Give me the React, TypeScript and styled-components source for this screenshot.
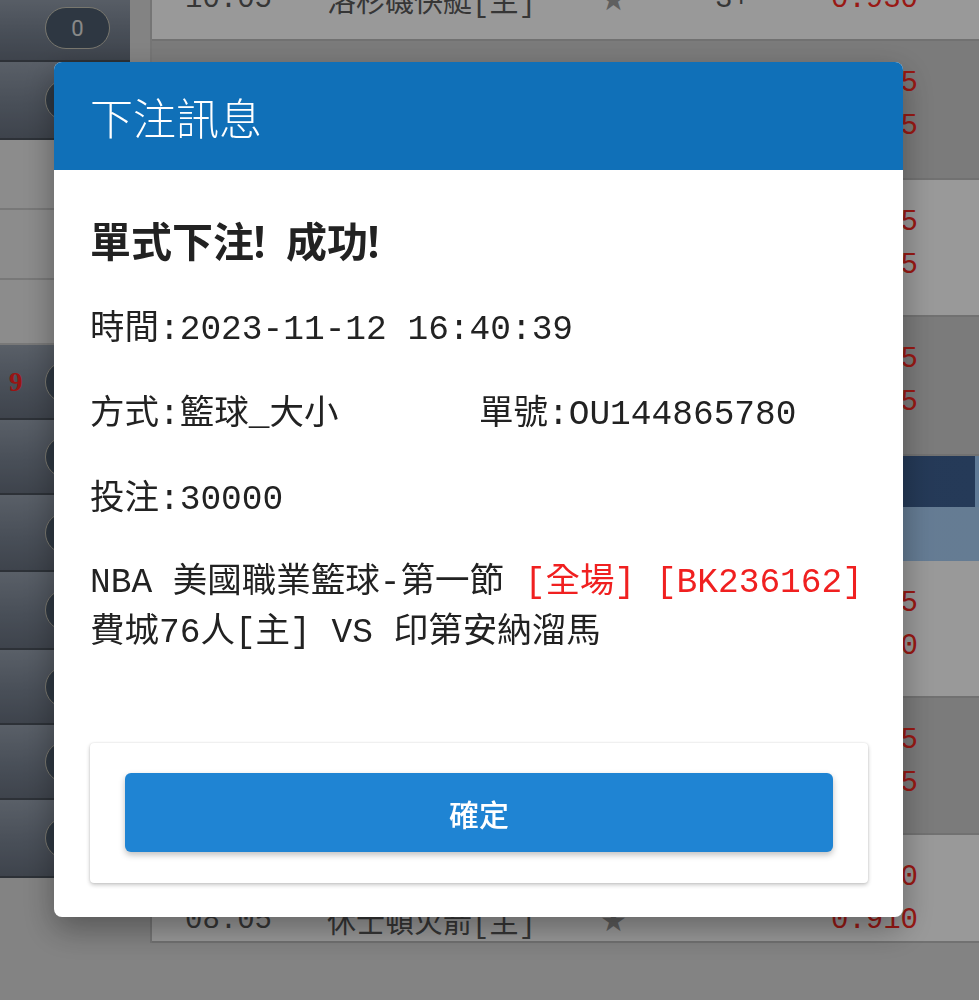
import React from 'react';
import styled, { createGlobalStyle } from 'styled-components';

const MONO = `'Liberation Mono', 'Noto Sans CJK TC', monospace`;
const CJK = `'Noto Sans CJK TC', 'Noto Sans', sans-serif`;

const GlobalStyle = createGlobalStyle`
  html, body {
    margin: 0;
    padding: 0;
    background: #dadada;
  }
  * {
    box-sizing: border-box;
  }
`;

type Line = {
  lead: string;
  team: string;
  star?: boolean;
  spread?: string;
  odds: string;
};

type Block = {
  height: number;
  shade: 'light' | 'dark';
  lines: Line[];
};

const sideItems: { kind: 'dark' | 'light'; badge?: string; mark?: string; height: number }[] = [
  { kind: 'dark', badge: '0', height: 66 },
  { kind: 'dark', badge: '0', height: 78 },
  { kind: 'light', height: 70 },
  { kind: 'light', height: 70 },
  { kind: 'light', height: 65 },
  { kind: 'dark', badge: '2', mark: '9', height: 75 },
  { kind: 'dark', badge: '1', height: 75 },
  { kind: 'dark', badge: '1', height: 77 },
  { kind: 'dark', badge: '3', height: 78 },
  { kind: 'dark', badge: '0', height: 75 },
  { kind: 'dark', badge: '2', height: 75 },
  { kind: 'dark', badge: '1', height: 78 },
];

const blocksTop: Block[] = [
  {
    height: 127,
    shade: 'light',
    lines: [
      { lead: '11-12', team: '金州勇士', spread: '', odds: '0.910' },
      { lead: '10:05', team: '洛杉磯快艇[主]', star: true, spread: '3+', odds: '0.930' },
    ],
  },
  {
    height: 139,
    shade: 'dark',
    lines: [
      { lead: '11-12', team: '波士頓塞爾提克', spread: '', odds: '0.955' },
      { lead: '08:35', team: '布魯克林籃網[主]', star: true, spread: '2', odds: '0.895' },
    ],
  },
  {
    height: 137,
    shade: 'light',
    lines: [
      { lead: '11-12', team: '紐約尼克', spread: '', odds: '0.925' },
      { lead: '09:05', team: '密爾瓦基公鹿[主]', star: true, spread: '5', odds: '0.925' },
    ],
  },
  {
    height: 139,
    shade: 'dark',
    lines: [
      { lead: '11-12', team: '邁阿密熱火', spread: '', odds: '0.935' },
      { lead: '09:35', team: '芝加哥公牛[主]', star: true, spread: '1+', odds: '0.915' },
    ],
  },
];

const blocksBottom: Block[] = [
  {
    height: 137,
    shade: 'light',
    lines: [
      { lead: '11-12', team: '鳳凰城太陽', spread: '', odds: '0.945' },
      { lead: '07:05', team: '奧克拉荷馬雷霆[主]', star: true, spread: '3', odds: '0.910' },
    ],
  },
  {
    height: 137,
    shade: 'dark',
    lines: [
      { lead: '11-12', team: '達拉斯獨行俠', spread: '', odds: '0.955' },
      { lead: '07:35', team: '聖安東尼奧馬刺[主]', star: true, spread: '4+', odds: '0.905' },
    ],
  },
  {
    height: 108,
    shade: 'light',
    lines: [
      { lead: '11-12', team: '紐奧良鵜鶘', spread: '', odds: '0.950' },
      { lead: '08:05', team: '休士頓火箭[主]', star: true, spread: '', odds: '0.910' },
    ],
  },
];

const GameList: React.FC<{ blocks: Block[] }> = ({ blocks }) => (
  <>
    {blocks.map((b, i) => (
      <GameBlock key={i} $shade={b.shade} style={{ height: b.height }}>
        {b.lines.map((l, j) => (
          <GameLine key={j}>
            <span className='Game-Lead'>{l.lead}</span>
            <span className='Game-Team'>{l.team}</span>
            <span className='Game-Star'>{l.star ? '★' : ''}</span>
            <span className='Game-Spread'>{l.spread}</span>
            <span className='Game-Odds'>{l.odds}</span>
          </GameLine>
        ))}
      </GameBlock>
    ))}
  </>
);

const App: React.FC = () => {
  return (
    <>
      <GlobalStyle />
      <Page>
        <Sidebar>
          {sideItems.map((item, i) => (
            <SideItem key={i} $kind={item.kind} style={{ height: item.height }}>
              {item.mark && <SideMark>{item.mark}</SideMark>}
              {item.badge && <SideBadge>{item.badge}</SideBadge>}
            </SideItem>
          ))}
        </Sidebar>

        <Main>
          <GameList blocks={blocksTop} />
          <LeagueHeader>
            <div className='League-Bar' />
            <div className='League-Sub' />
          </LeagueHeader>
          <GameList blocks={blocksBottom} />
        </Main>
      </Page>

      <Backdrop>
        <ModalFrame>
          <div className='Modal-Header'>下注訊息</div>
          <div className='Modal-Body'>
            <ResultTitle>
              單式下注<Bang>！</Bang>成功<Bang>！</Bang>
            </ResultTitle>
            <InfoRow>時間:2023-11-12 16:40:39</InfoRow>
            <InfoRow $columns>
              <span>方式:籃球_大小</span>
              <span>單號:OU144865780</span>
            </InfoRow>
            <InfoRow $tight>投注:30000</InfoRow>
            <MatchInfo>
              <div>
                NBA 美國職業籃球-第一節 <Highlight>[全場]</Highlight>{' '}
                <Highlight>[BK236162]</Highlight>
              </div>
              <div>費城76人[主] VS 印第安納溜馬</div>
            </MatchInfo>
            <ActionCard>
              <ConfirmButton type='button'>確定</ConfirmButton>
            </ActionCard>
          </div>
        </ModalFrame>
      </Backdrop>
    </>
  );
};

const Page = styled.div`
  display: flex;
  align-items: flex-start;
  height: 1000px;
  overflow: hidden;
  background: #dadada;
`;

const Sidebar = styled.div`
  width: 130px;
  flex-shrink: 0;
  display: flex;
  flex-direction: column;
  margin-top: -4px;
`;

const SideItem = styled.div<{ $kind: 'dark' | 'light' }>`
  position: relative;
  display: flex;
  align-items: center;
  padding-left: 45px;
  border-bottom: 2px solid
    ${({ $kind }) => ($kind === 'dark' ? '#4b535d' : '#c9c9c9')};
  background: ${({ $kind }) =>
    $kind === 'dark'
      ? 'linear-gradient(180deg, #959fad 0%, #7a8493 55%, #68717f 100%)'
      : '#e9e9e9'};
`;

const SideMark = styled.span`
  position: absolute;
  left: 9px;
  top: 50%;
  transform: translateY(-50%);
  font-family: 'Liberation Serif', serif;
  font-weight: 700;
  font-size: 27px;
  color: #ff2222;
`;

const SideBadge = styled.span`
  width: 65px;
  height: 42px;
  border-radius: 21px;
  background: #4e5d6e;
  border: 1px solid #c9c6b8;
  color: #e4e4e4;
  font-family: 'Roboto', sans-serif;
  font-size: 22px;
  display: flex;
  align-items: center;
  justify-content: center;
`;

const Main = styled.div`
  flex: 1;
  margin-left: 20px;
  margin-top: -86px;
  display: flex;
  flex-direction: column;
  border-left: 2px solid #c4c4c4;
`;

const GameBlock = styled.div<{ $shade: 'light' | 'dark' }>`
  padding-top: 21px;
  background: ${({ $shade }) => ($shade === 'light' ? '#ffffff' : '#cdcdcd')};
  border-bottom: 2px solid #bdbdbd;
  display: flex;
  flex-direction: column;
`;

const GameLine = styled.div`
  height: 43px;
  display: grid;
  grid-template-columns: 142px 273px 115px 1fr auto;
  align-items: center;
  padding: 0 61px 0 33px;
  font-family: ${MONO};
  font-size: 29px;
  color: #5a5a5a;

  .Game-Star {
    color: #9e9e9e;
    font-family: 'DejaVu Sans', sans-serif;
    font-size: 30px;
  }

  .Game-Odds {
    color: #ff2a22;
  }
`;

const LeagueHeader = styled.div`
  display: flex;
  flex-direction: column;
  background: #9ecbfa;

  .League-Bar {
    height: 51px;
    margin-right: 4px;
    background: linear-gradient(90deg, #3a5b8c, #3e6193);
  }

  .League-Sub {
    height: 54px;
    background: linear-gradient(90deg, #9ecbfa, #a9cff6);
  }
`;

const Backdrop = styled.div`
  position: fixed;
  inset: 0;
  background: rgba(0, 0, 0, 0.4);
  display: flex;
  align-items: flex-start;
  padding: 62px 0 0 54px;
`;

const ModalFrame = styled.div`
  width: 849px;
  background: #ffffff;
  border-radius: 8px;
  box-shadow: 0 12px 32px rgba(0, 0, 0, 0.35);
  overflow: hidden;

  .Modal-Header {
    height: 108px;
    padding: 0 36px;
    display: flex;
    align-items: center;
    background: #1070b8;
    color: #ffffff;
    font-family: ${CJK};
    font-size: 43px;
    font-weight: 300;
  }

  .Modal-Body {
    padding: 45px 35px 34px 36px;
    display: flex;
    flex-direction: column;
  }
`;

const ResultTitle = styled.div`
  font-family: ${CJK};
  font-size: 41px;
  font-weight: 700;
  line-height: 48px;
  color: #222222;
  margin-bottom: 42px;
`;

const Bang = styled.span`
  display: inline-block;
  margin: 0 6px 0 -15px;
`;

const InfoRow = styled.div<{ $columns?: boolean; $tight?: boolean }>`
  font-family: ${MONO};
  font-size: 34.5px;
  line-height: 50px;
  color: #222222;
  white-space: pre;
  display: ${({ $columns }) => ($columns ? 'grid' : 'block')};
  grid-template-columns: 1fr 1fr;
  margin-bottom: ${({ $tight }) => ($tight ? '33px' : '35px')};
`;

const MatchInfo = styled.div`
  font-family: ${MONO};
  font-size: 34.5px;
  line-height: 50px;
  color: #222222;
  white-space: pre;
  margin-bottom: 85px;
`;

const Highlight = styled.span`
  color: #f02020;
`;

const ActionCard = styled.div`
  padding: 30px 35px 31px;
  background: #ffffff;
  border-radius: 4px;
  box-shadow: 0 2px 4px rgba(0, 0, 0, 0.22), 0 0 2px rgba(0, 0, 0, 0.12);
`;

const ConfirmButton = styled.button`
  width: 100%;
  height: 79px;
  border: none;
  border-radius: 6px;
  background: #1f84d3;
  color: #ffffff;
  font-family: ${CJK};
  font-size: 30px;
  font-weight: 500;
  box-shadow: 0 3px 6px rgba(0, 0, 0, 0.25);
  cursor: pointer;
`;

export default App;
